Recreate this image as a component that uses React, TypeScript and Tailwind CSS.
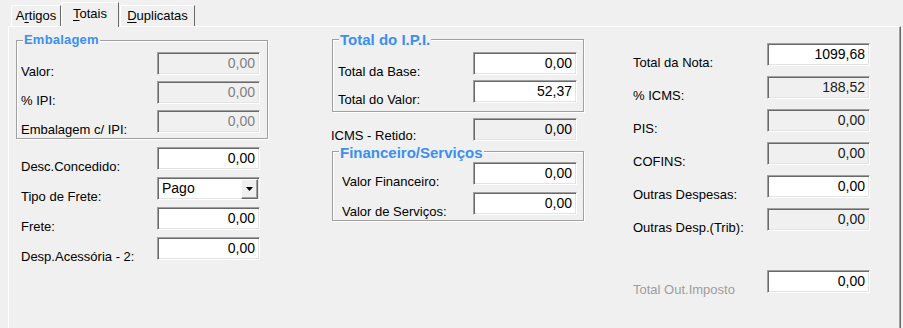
import React from "react";

const FONT = "font-['Liberation_Sans',Arial,sans-serif]";

type BoxProps = { value: string; enabled?: boolean; valueCls?: string; w?: string };

function Box({ value, enabled = true, valueCls = "text-black", w = "w-[103px]" }: BoxProps) {
  return (
    <div
      className={`${w} h-[23px] shrink-0 border border-t-[#a0a0a0] border-l-[#a0a0a0] border-r-white border-b-white shadow-[inset_1px_1px_0_#696969,inset_-1px_-1px_0_#e3e3e3] ${
        enabled ? "bg-white" : "bg-[#f0f0f0]"
      } flex justify-end pr-[4px] pt-[2px] text-[14px] leading-[16px] ${valueCls}`}
    >
      {value}
    </div>
  );
}

function Label({ children, cls = "w-[136px] pt-[13px]", color = "text-black" }: { children: React.ReactNode; cls?: string; color?: string }) {
  return <div className={`${cls} shrink-0 text-[13px] leading-[13px] whitespace-nowrap ${color}`}>{children}</div>;
}

function Group({ title, titleCls, cls, children }: { title: string; titleCls: string; cls: string; children: React.ReactNode }) {
  return (
    <div className={`relative border border-[#a0a0a0] shadow-[inset_1px_1px_0_#ffffff,1px_1px_0_#ffffff] flex flex-col ${cls}`}>
      <div
        className={`absolute left-[6px] bg-[#f0f0f0] px-[1px] font-bold leading-[14px] text-[#3b8ff0] whitespace-nowrap ${titleCls}`}
      >
        {title}
      </div>
      {children}
    </div>
  );
}

function Combo() {
  return (
    <div className="w-[103px] h-[23px] shrink-0 border border-t-[#a0a0a0] border-l-[#a0a0a0] border-r-white border-b-white shadow-[inset_1px_1px_0_#696969,inset_-1px_-1px_0_#e3e3e3] bg-white flex items-stretch">
      <div className="flex-1 pl-[4px] pt-[2px] text-[14px] leading-[16px] text-black">Pago</div>
      <div className="w-[17px] mt-[1px] mr-[1px] bg-[#f0f0f0] border border-t-white border-l-white border-r-[#696969] border-b-[#696969] shadow-[inset_-1px_-1px_0_#a0a0a0] flex items-center justify-center">
        <svg width="7" height="4" viewBox="0 0 7 4">
          <path d="M0 0 H7 L3.5 4 Z" fill="#000" />
        </svg>
      </div>
    </div>
  );
}

export default function App() {
  return (
    <div className={`w-[903px] h-[328px] overflow-hidden bg-[#f0f0f0] text-black ${FONT}`}>
      {/* Tabs */}
      <div className="flex items-end h-[26px] pl-[11px]">
        <div className="h-[21px] w-[50px] border-t border-l border-r border-t-white border-l-white border-r-[#696969] rounded-tl-[2px] flex justify-center pt-[2px] text-[13px] leading-[16px]">
          <span>
            A<span className="underline underline-offset-[2px]">r</span>tigos
          </span>
        </div>
        <div className="relative z-10 h-[25px] -mb-[1px] w-[58px] bg-[#f0f0f0] border-t border-l border-r border-t-white border-l-white border-r-[#696969] rounded-tl-[2px] flex justify-center pt-[3px] text-[13px] leading-[16px]">
          <span>
            <span className="underline underline-offset-[2px]">T</span>otais
          </span>
        </div>
        <div className="ml-[1px] h-[21px] w-[75px] border-t border-l border-r border-t-white border-l-white border-r-[#696969] rounded-tl-[2px] flex justify-center pt-[2px] text-[13px] leading-[16px]">
          <span>
            <span className="underline underline-offset-[2px]">D</span>uplicatas
          </span>
        </div>
      </div>

      {/* Panel */}
      <div className="ml-[8px] mr-[2px] h-[310px] border-t border-l border-r border-t-white border-l-white border-r-[#696969] shadow-[inset_-1px_0_0_#a0a0a0] flex items-start">
        {/* Column 1 */}
        <div className="ml-[7px] mt-[13px] w-[252px] shrink-0 flex flex-col">
          <Group title="Embalagem" titleCls="-top-[8px] text-[13px] tracking-[0.2px]" cls="h-[99px] pt-[11px] pl-[4px] gap-[6px]">
            <div className="flex h-[23px]">
              <Label>Valor:</Label>
              <Box value="0,00" enabled={false} valueCls="text-[#808080]" />
            </div>
            <div className="flex h-[23px]">
              <Label>% IPI:</Label>
              <Box value="0,00" enabled={false} valueCls="text-[#808080]" />
            </div>
            <div className="flex h-[23px]">
              <Label>Embalagem c/ IPI:</Label>
              <Box value="0,00" enabled={false} valueCls="text-[#808080]" />
            </div>
          </Group>
          <div className="mt-[8px] pl-[5px] flex flex-col gap-[7px]">
            <div className="flex h-[23px]">
              <Label>Desc.Concedido:</Label>
              <Box value="0,00" />
            </div>
            <div className="flex h-[23px]">
              <Label>Tipo de Frete:</Label>
              <Combo />
            </div>
            <div className="flex h-[23px]">
              <Label>Frete:</Label>
              <Box value="0,00" />
            </div>
            <div className="flex h-[23px]">
              <Label>Desp.Acessória - 2:</Label>
              <Box value="0,00" />
            </div>
          </div>
        </div>

        {/* Column 2 */}
        <div className="ml-[64px] mt-[12px] w-[252px] shrink-0 flex flex-col">
          <Group title="Total do I.P.I." titleCls="-top-[7px] text-[15px]" cls="h-[73px] pt-[12px] pl-[5px] gap-[5px]">
            <div className="flex h-[23px]">
              <Label cls="w-[135px] pt-[13px]">Total da Base:</Label>
              <Box value="0,00" w="w-[104px]" />
            </div>
            <div className="flex h-[23px]">
              <Label cls="w-[135px] pt-[13px]">Total do Valor:</Label>
              <Box value="52,37" w="w-[104px]" />
            </div>
          </Group>
          <div className="flex h-[23px] mt-[6px]">
            <Label cls="w-[142px] -ml-[1px] pt-[11px]">ICMS - Retido:</Label>
            <Box value="0,00" enabled={false} w="w-[104px]" />
          </div>
          <Group title="Financeiro/Serviços" titleCls="-top-[6px] text-[15px]" cls="mt-[10px] h-[70px] pt-[10px] pl-[9px] gap-[7px]">
            <div className="flex h-[23px]">
              <Label cls="w-[131px] pt-[13px]">Valor Financeiro:</Label>
              <Box value="0,00" w="w-[104px]" />
            </div>
            <div className="flex h-[23px]">
              <Label cls="w-[131px] pt-[13px]">Valor de Serviços:</Label>
              <Box value="0,00" w="w-[104px]" />
            </div>
          </Group>
        </div>

        {/* Column 3 */}
        <div className="ml-[49px] mt-[16px] w-[237px] shrink-0 flex flex-col">
          <div className="flex flex-col gap-[10px]">
            <div className="flex h-[23px]">
              <Label cls="w-[134px] pt-[13px]">Total da Nota:</Label>
              <Box value="1099,68" />
            </div>
            <div className="flex h-[23px]">
              <Label cls="w-[134px] pt-[13px]">% ICMS:</Label>
              <Box value="188,52" enabled={false} valueCls="text-[#1a1a1a]" />
            </div>
            <div className="flex h-[23px]">
              <Label cls="w-[134px] pt-[13px]">PIS:</Label>
              <Box value="0,00" enabled={false} valueCls="text-[#1a1a1a]" />
            </div>
            <div className="flex h-[23px]">
              <Label cls="w-[134px] pt-[13px]">COFINS:</Label>
              <Box value="0,00" enabled={false} valueCls="text-[#1a1a1a]" />
            </div>
            <div className="flex h-[23px]">
              <Label cls="w-[134px] pt-[13px]">Outras Despesas:</Label>
              <Box value="0,00" />
            </div>
            <div className="flex h-[23px]">
              <Label cls="w-[134px] pt-[13px]">Outras Desp.(Trib):</Label>
              <Box value="0,00" enabled={false} valueCls="text-[#1a1a1a]" />
            </div>
          </div>
          <div className="flex h-[23px] mt-[39px]">
            <Label cls="w-[134px] pt-[13px]" color="text-[#9d9d9d]">Total Out.Imposto</Label>
            <Box value="0,00" />
          </div>
        </div>
      </div>
    </div>
  );
}
